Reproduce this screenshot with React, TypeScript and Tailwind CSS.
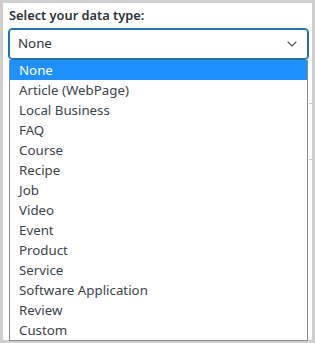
import { ChevronDown } from "lucide-react";

const options = [
  "None",
  "Article (WebPage)",
  "Local Business",
  "FAQ",
  "Course",
  "Recipe",
  "Job",
  "Video",
  "Event",
  "Product",
  "Service",
  "Software Application",
  "Review",
  "Custom",
];

export default function App() {
  return (
    <div className="w-[315px] h-[343px] bg-[#cfcfcf] p-[3px] overflow-hidden font-['Noto_Sans',sans-serif]">
      <div className="h-full bg-white pl-[5px] flex flex-col">
        <div className="flex-1 flex">
          <div className="w-[301px] flex flex-col">
            <p className="text-[12.8px] leading-[20px] font-semibold text-[#2c3338] pt-[2px] pl-[1px]">
              Select your data type:
            </p>
            <div className="mt-[3px] h-[32px] border border-[#2271b1] rounded-[4px] flex items-center justify-between pl-[9px] pr-[8px] text-[13.3px] text-[#2c3338] shadow-[0_0_0_1px_#2271b1_inset]">
              <span>None</span>
              <ChevronDown size={16} strokeWidth={1.75} className="text-[#50575e]" />
            </div>
            <ul className="mx-[1px] border border-[#8c8c8c] border-t-0 bg-white text-[13.3px] text-[#3c434a]">
              {options.map((o, i) => (
                <li
                  key={o}
                  className={`h-[20px] leading-[20px] pl-[9px] ${i === 0 ? "bg-[#1e90ff] text-white" : ""}`}
                >
                  {o}
                </li>
              ))}
            </ul>
          </div>
          <div className="flex-1 flex flex-col pt-[100px]">
            <div className="h-[57px] border-y border-[#c4c4c4] bg-white" />
          </div>
        </div>
      </div>
    </div>
  );
}
